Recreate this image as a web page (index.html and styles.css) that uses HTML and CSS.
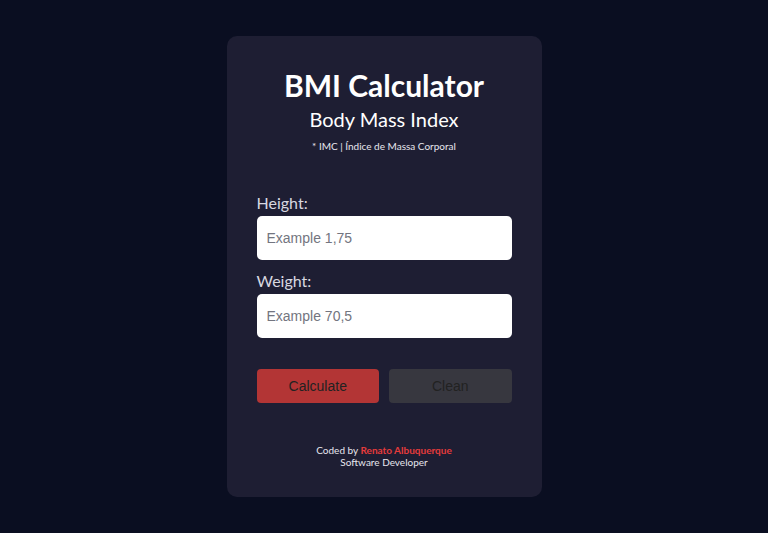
FILE: index.html
```html
<!DOCTYPE html>
<html lang="en">
<head>
<meta charset="utf-8">
<title>BMI Calculator</title>
<link rel="stylesheet" href="styles.css">
</head>
<body>
<main class="card">
  <header class="head">
    <h1 class="title">BMI Calculator</h1>
    <h2 class="subtitle">Body Mass Index</h2>
    <p class="note">* IMC | Índice de Massa Corporal</p>
  </header>
  <form class="form">
    <label class="label" for="h">Height:</label>
    <input class="input" id="h" type="text" placeholder="Example 1,75">
    <label class="label" for="w">Weight:</label>
    <input class="input" id="w" type="text" placeholder="Example 70,5">
    <div class="buttons">
      <button type="button" class="btn btn-calc">Calculate</button>
      <button type="button" class="btn btn-clean">Clean</button>
    </div>
  </form>
  <footer class="foot">
    <p>Coded by <span class="author">Renato Albuquerque</span></p>
    <p>Software Developer</p>
  </footer>
</main>
</body>
</html>
```
FILE: styles.css
```css
* { box-sizing: border-box; }
html, body { margin: 0; padding: 0; }
body {
  background: #0a0e21;
  font-family: Lato, "Open Sans", sans-serif;
  color: #fff;
  min-height: 533px;
  display: flex;
  justify-content: center;
  align-items: flex-start;
  padding-top: 36px;
}
.card {
  width: 315px;
  height: 461px;
  background: #1e1e33;
  border-radius: 10px;
  padding: 30px 30px 0;
  display: flex;
  flex-direction: column;
}
.head { text-align: center; }
.title {
  margin: 0;
  font-size: 30px;
  font-weight: 700;
  line-height: 38px;
}
.subtitle {
  margin: 0;
  font-size: 20px;
  font-weight: 400;
  line-height: 30px;
}
.note {
  margin: 5px 0 0;
  font-size: 10px;
  line-height: 14px;
  color: #e6e6ee;
}
.form {
  display: flex;
  flex-direction: column;
  margin-top: 40px;
}
.label {
  font-size: 16px;
  line-height: 20px;
  color: #d8d8e0;
  margin-bottom: 3px;
}
.input {
  height: 44px;
  border: none;
  border-radius: 5px;
  background: #fff;
  padding: 0 10px;
  font-family: "Liberation Sans", Arial, sans-serif;
  font-size: 14px;
  color: #333;
  margin-bottom: 11px;
  outline: none;
}
.input::placeholder { color: #737580; }
.buttons {
  display: flex;
  gap: 10px;
  margin-top: 20px;
}
.btn {
  flex: 1;
  height: 34px;
  border: none;
  border-radius: 4px;
  font-family: "Liberation Sans", Arial, sans-serif;
  font-size: 14px;
  color: #222;
}
.btn-calc { background: #b33535; }
.btn-clean { background: #37373f; }
.foot {
  margin-top: 41px;
  text-align: center;
  font-size: 10px;
  line-height: 12px;
  color: #e6e6ee;
}
.foot p { margin: 0; }
.author { color: #e53b3b; font-weight: 700; }
```
